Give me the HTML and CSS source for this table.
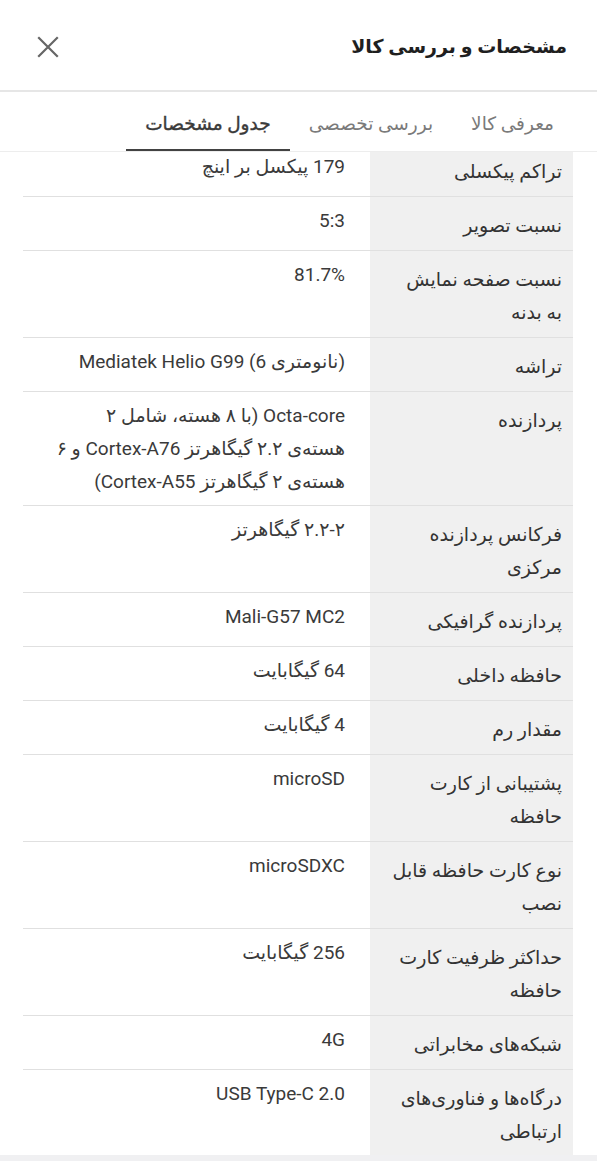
FILE: index.html
```html
<!DOCTYPE html>
<html lang="fa" dir="rtl">
<head>
<meta charset="utf-8">
<title>مشخصات و بررسی کالا</title>
<link rel="stylesheet" href="styles.css">
</head>
<body>
<div class="sheet">
  <header class="header">
    <h1 class="title">مشخصات و بررسی کالا</h1>
    <button class="close" aria-label="بستن">
      <svg width="22" height="22" viewBox="0 0 22 22"><path d="M2 2 L20 20 M20 2 L2 20" stroke="#666" stroke-width="2.2" fill="none" stroke-linecap="square"/></svg>
    </button>
  </header>
  <nav class="tabs">
    <span class="tab">معرفی کالا</span>
    <span class="tab">بررسی تخصصی</span>
    <span class="tab active">جدول مشخصات</span>
  </nav>
  <div class="content">
    <div class="specs">
      <div class="row"><div class="label">تراکم پیکسلی</div><div class="value">179 پیکسل بر اینچ</div></div>
      <div class="row"><div class="label">نسبت تصویر</div><div class="value">5:3</div></div>
      <div class="row"><div class="label">نسبت صفحه نمایش<br>به بدنه</div><div class="value">81.7%</div></div>
      <div class="row"><div class="label">تراشه</div><div class="value">(نانومتری 6) Mediatek Helio G99</div></div>
      <div class="row"><div class="label">پردازنده</div><div class="value">Octa-core (با ۸ هسته، شامل ۲<br>هسته‌ی ۲.۲ گیگاهرتز Cortex-A76 و ۶<br>هسته‌ی ۲ گیگاهرتز Cortex-A55)</div></div>
      <div class="row"><div class="label">فرکانس پردازنده<br>مرکزی</div><div class="value">۲.۲-۲ گیگاهرتز</div></div>
      <div class="row"><div class="label">پردازنده گرافیکی</div><div class="value">Mali-G57 MC2</div></div>
      <div class="row"><div class="label">حافظه داخلی</div><div class="value">64 گیگابایت</div></div>
      <div class="row"><div class="label">مقدار رم</div><div class="value">4 گیگابایت</div></div>
      <div class="row"><div class="label">پشتیبانی از کارت<br>حافظه</div><div class="value">microSD</div></div>
      <div class="row"><div class="label">نوع کارت حافظه قابل<br>نصب</div><div class="value">microSDXC</div></div>
      <div class="row"><div class="label">حداکثر ظرفیت کارت<br>حافظه</div><div class="value">256 گیگابایت</div></div>
      <div class="row"><div class="label">شبکه‌های مخابراتی</div><div class="value">4G</div></div>
      <div class="row"><div class="label">درگاه‌ها و فناوری‌های<br>ارتباطی</div><div class="value">USB Type-C 2.0</div></div>
    </div>
  </div>
  <div class="footer-strip"></div>
</div>
</body>
</html>
```
FILE: styles.css
```css
* { box-sizing: border-box; }
html, body { margin: 0; padding: 0; background: #fff; }
body {
  font-family: Roboto, "DejaVu Sans", sans-serif;
  color: #333;
  direction: rtl;
}
.sheet {
  width: 597px;
  height: 1161px;
  display: flex;
  flex-direction: column;
  overflow: hidden;
}
.header {
  height: 92px;
  flex: none;
  display: flex;
  align-items: center;
  justify-content: space-between;
  padding: 3px 30px 0 37px;
  border-bottom: 2px solid #e6e6e6;
}
.title {
  margin: 0;
  font-size: 19px;
  font-weight: 700;
  color: #1f1f1f;
  line-height: 30px;
}
.close {
  border: 0;
  background: none;
  padding: 0;
  width: 22px;
  height: 22px;
  display: flex;
}
.tabs {
  flex: none;
  display: flex;
  padding: 0 24px 0 0;
  border-bottom: 1px solid #ededed;
  height: 60px;
}
.tab {
  padding: 19px 19px 12px;
  line-height: 26px;
  font-size: 18.5px;
  color: #7a7a7a;
  border-bottom: 2px solid transparent;
  white-space: nowrap;
}
.tab.active {
  color: #3a3a3a;
  -webkit-text-stroke: 0.4px #3a3a3a;
  border-bottom-color: #424242;
}
.content {
  flex: 1;
  overflow: hidden;
}
.specs {
  margin: -9px 24px 0 23px;
}
.row {
  display: grid;
  grid-template-columns: 203px 1fr;
  border-bottom: 1px solid #e0e0e0;
}
.label {
  background: #f0f0f0;
  padding: 12px 11px 8px 6px;
  line-height: 33px;
  font-size: 19px;
  color: #333;
  white-space: nowrap;
}
.value {
  padding: 7px 25px 7px 6px;
  line-height: 33px;
  font-size: 19px;
  color: #3a3a3a;
  white-space: nowrap;
}
.footer-strip {
  flex: none;
  height: 6px;
  background: #f0f0f2;
}
```
